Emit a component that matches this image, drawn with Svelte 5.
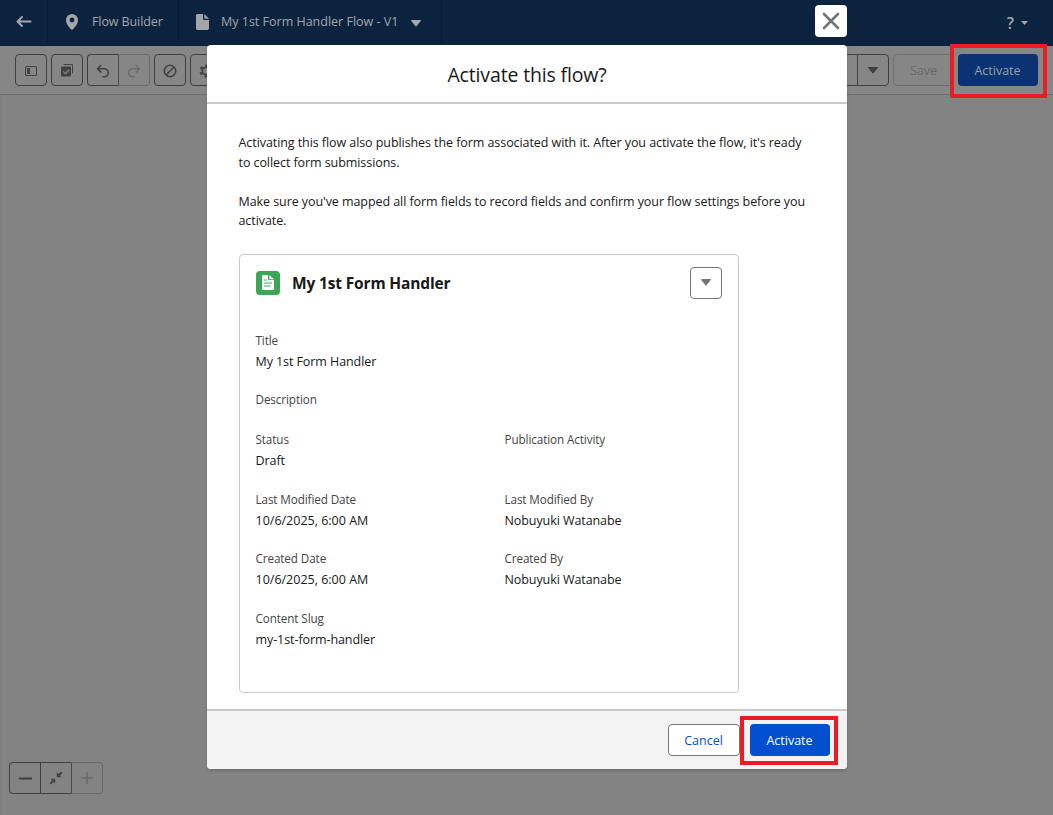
<script>
  const fields = [
    { label: 'Title', value: 'My 1st Form Handler', wide: true },
    { label: 'Description', value: '', wide: true },
    { label: 'Status', value: 'Draft' },
    { label: 'Publication Activity', value: '' },
    { label: 'Last Modified Date', value: '10/6/2025, 6:00 AM' },
    { label: 'Last Modified By', value: 'Nobuyuki Watanabe' },
    { label: 'Created Date', value: '10/6/2025, 6:00 AM' },
    { label: 'Created By', value: 'Nobuyuki Watanabe' },
    { label: 'Content Slug', value: 'my-1st-form-handler', wide: true }
  ];
</script>

<div class="app">
  <nav>
    <div class="back">
      <svg width="16" height="14" viewBox="0 0 16 14" fill="none" stroke="#a3a5a8" stroke-width="2" stroke-linecap="round" stroke-linejoin="round"><path d="M14.500 6.500H1.500M6 2 1.500 6.500 6 11" /></svg>
    </div>
    <div class="brand">
      <svg width="12" height="16" viewBox="0 0 12 16"><path fill="#a3a5a8" fill-rule="evenodd" d="M6 0a6 6 0 0 0-6 6c0 4 3.500 7.500 5.300 9.600.4.500 1 .5 1.400 0C8.500 13.500 12 10 12 6a6 6 0 0 0-6-6Zm0 8.400a2.400 2.400 0 1 1 0-4.800 2.400 2.400 0 0 1 0 4.800Z" /></svg>
      <span class="t-brand">Flow Builder</span>
    </div>
    <div class="flow">
      <svg width="13" height="16" viewBox="0 0 13 16" fill="#a3a5a8"><path d="M1.500 0H7v4.500C7 5.500 7.500 6 8.500 6H13v8.500c0 .8-.7 1.500-1.500 1.500h-10C.7 16 0 15.300 0 14.500v-13C0 .7.7 0 1.500 0Z" /><path d="M8.300 0 13 4.700H9c-.4 0-.7-.3-.7-.7Z" /></svg>
      <span>My 1st Form Handler Flow - V1</span>
      <svg class="caret" width="10" height="7" viewBox="0 0 10 7"><path fill="#a3a5a8" d="M.6 0h8.800c.5 0 .7.500.4.900L5.500 6.300c-.3.400-.7.400-1 0L.2.900C-.1.500.1 0 .6 0Z" /></svg>
    </div>
    <div class="help">
      <b>?</b>
      <svg width="7" height="4" viewBox="0 0 7 4"><path fill="#a3a5a8" d="M0 0h7L3.500 4Z" /></svg>
    </div>
  </nav>

  <div class="toolbar">
    <div class="tool">
      <svg width="12" height="10" viewBox="0 0 12 10"><rect x=".5" y=".5" width="11" height="9" rx=".5" fill="none" stroke="#414141" /><path fill="#414141" d="M2 2h3v6H2z" /></svg>
    </div>
    <div class="tool">
      <svg width="12" height="13" viewBox="0 0 12 13"><path fill="#414141" d="M3.500 0h7.500a1 1 0 0 1 1 1v7.500a1 1 0 0 1-1 1V1H2.500a1 1 0 0 1 1-1Z" /><rect y="2.500" width="10" height="10" rx="1" fill="#414141" /><path d="m2.300 7.500 2.100 2.100L8 6" stroke="#858585" stroke-width="1.300" fill="none" /></svg>
    </div>
    <div class="pair">
      <div class="tool left">
        <svg width="14" height="14" viewBox="0 0 14 14" fill="none" stroke="#414141" stroke-width="1.600" stroke-linecap="round" stroke-linejoin="round"><path d="M4.800 1.500 1.500 4.800l3.300 3.300M1.700 4.800H8.300a4 4 0 0 1 0 8H7" /></svg>
      </div>
      <div class="tool right faint">
        <svg width="14" height="14" viewBox="0 0 14 14" fill="none" stroke="#6b6b6b" stroke-width="1.600" stroke-linecap="round" stroke-linejoin="round"><path d="M9.200 1.500 12.500 4.800 9.200 8.100M12.300 4.800H5.700a4 4 0 0 0 0 8H7" /></svg>
      </div>
    </div>
    <div class="tool">
      <svg width="14" height="14" viewBox="0 0 14 14" fill="none" stroke="#414141" stroke-width="1.600"><circle cx="7" cy="7" r="5.700" /><path d="m3 11 8-8" /></svg>
    </div>
    <div class="tool">
      <svg width="14" height="14" viewBox="0 0 14 14" fill="none" stroke="#414141"><circle cx="7" cy="7" r="3.700" stroke-width="1.800" /><circle cx="7" cy="7" r="5.600" stroke-width="2" stroke-dasharray="2.700 3.164" stroke-dashoffset="-1.580" /></svg>
    </div>
    <div class="split">
      <div class="tool wide-tool"></div>
      <div class="tool more">
        <svg width="10" height="7" viewBox="0 0 10 7"><path fill="#414141" d="M.6 0h8.800c.5 0 .7.500.4.900L5.500 6.300c-.3.400-.7.400-1 0L.2.900C-.1.500.1 0 .6 0Z" /></svg>
      </div>
    </div>
    <div class="save">Save</div>
    <div class="activate dim">Activate</div>
    <i class="mark"></i>
  </div>

  <main>
    <div class="zoom">
      <div class="tool left"><svg width="14" height="14" viewBox="0 0 14 14"><path stroke="#3f3f3f" stroke-width="1.800" stroke-linecap="round" d="M1.500 7.500h12" /></svg></div>
      <div class="tool mid"><svg width="14" height="14" viewBox="0 0 14 14" stroke="#414141" stroke-width="2" fill="#414141"><path d="M12.200 1.800 9.500 4.500M1.800 12.200l2.700-2.700" stroke-linecap="round" /><path stroke="none" d="M7.800 1.500v4.700h4.700ZM6.200 12.500V7.800H1.500Z" /></svg></div>
      <div class="tool right faint"><svg width="14" height="14" viewBox="0 0 14 14"><path stroke="#6b6b6b" stroke-width="1.600" stroke-linecap="round" d="M1.500 7h11M7 1.500v11" /></svg></div>
    </div>
  </main>

  <section class="modal">
    <div class="close"><svg width="18" height="18" viewBox="0 0 18 18"><path stroke="#747474" stroke-width="2.600" stroke-linecap="round" d="m2 2 14 14M16 2 2 16" /></svg></div>
    <header><h1>Activate this flow?</h1></header>
    <div class="body">
      <p>Activating this flow also publishes the form associated with it. After you activate the flow, it's ready<br />to collect form submissions.</p>
      <p>Make sure you've mapped all form fields to record fields and confirm your flow settings before you<br />activate.</p>
      <article>
        <div class="cardhead">
          <span class="doc">
            <svg width="12" height="15" viewBox="0 0 12 15"><path fill="#fff" d="M1.300 0H6v3.700C6 4.600 6.500 5 7.200 5H12v8.700a1.300 1.300 0 0 1-1.300 1.300H1.300A1.300 1.300 0 0 1 0 13.700V1.300A1.300 1.300 0 0 1 1.300 0ZM7.300 0 12 4.200H8c-.4 0-.7-.3-.7-.7Z" /><path d="M2.500 5h2M2.500 8h7M2.500 11h5.500" stroke="#3ba755" stroke-width="1.200" stroke-linecap="round" /></svg>
          </span>
          <h2>My 1st Form Handler</h2>
          <div class="menu"><svg width="10" height="7" viewBox="0 0 10 7"><path fill="#747474" d="M.6 0h8.800c.5 0 .7.500.4.900L5.500 6.300c-.3.400-.7.400-1 0L.2.900C-.1.500.1 0 .6 0Z" /></svg></div>
        </div>
        <dl>
          {#each fields as f}
            <div class:wide={f.wide}>
              <dt>{f.label}</dt>
              <dd class:date={f.value.includes('/')}>{f.value}</dd>
            </div>
          {/each}
        </dl>
      </article>
    </div>
    <footer>
      <div class="cancel">Cancel</div>
      <div class="activate">Activate</div>
      <i class="mark"></i>
    </footer>
  </section>
</div>

<style>
  :global(body) { margin: 0; }
  * { box-sizing: border-box; }
  .app { position: relative; width: 1053px; height: 815px; overflow: hidden; display: flex; flex-direction: column; background: #838383; font-family: "Open Sans", "Noto Sans", sans-serif; font-size: 12.5px; color: #181818; }
  svg { display: block; flex: none; }
  nav { height: 46px; flex: none; display: flex; background: #0c2340; color: #a3a5a8; padding-bottom: 3px; line-height: 20px; white-space: nowrap; box-shadow: inset 0 -1px #0a1e38; }
  nav > div { display: flex; align-items: center; }
  .back { width: 47px; justify-content: center; box-shadow: 1px 0 #091b33; }
  .brand { width: 131px; padding-left: 19px; gap: 14px; box-shadow: 1px 0 #091b33; }
  .t-brand { letter-spacing: -.1px; }
  .flow { width: 263px; padding-left: 18px; gap: 12px; box-shadow: 1px 0 #091b33; }
  .caret { margin: 3px 0 0 1px; }
  .help { margin-left: auto; padding-right: 25px; gap: 7px; }
  .help b { font-size: 16px; font-weight: 600; line-height: 20px; margin-top: 2px; }
  .help svg { margin-top: 3px; }
  .toolbar { position: relative; height: 49px; flex: none; display: flex; padding: 8px 15px 0; gap: 4px; background: #868686; border-bottom: 1px solid #6d6d6d; }
  .tool { width: 32px; height: 32px; border: 1px solid #3f3f3f; border-radius: 4px; display: flex; align-items: center; justify-content: center; }
  .toolbar .tool svg { margin-top: 1px; }
  .pair, .zoom, .split { display: flex; }
  .pair .tool { width: 31px; }
  .pair .right { width: 32px; }
  .tool.left { border-radius: 4px 0 0 4px; border-right-width: 0; }
  .tool.right { border-radius: 0 4px 4px 0; }
  .tool.faint { border-color: #6a6a6a; border-left-color: #4b4b4b; }
  .tool.mid { border-radius: 0; border-right: 0; }
  .split { margin-left: auto; }
  .wide-tool { width: 80px; border-radius: 4px 0 0 4px; border-right: 0; }
  .more { border-radius: 0 4px 4px 0; }
  .save { width: 61px; height: 32px; border: 1px solid #6f6f6f; border-radius: 4px; line-height: 31px; text-align: center; color: #686868; }
  .activate { width: 80px; height: 32px; border-radius: 4px; background: #0250d0; color: #fff; line-height: 33px; text-align: center; padding-right: 1px; }
  .dim { background: #0b3272; color: #9c9fa4; }
  .mark { position: absolute; border: 4px solid #ed1c24; }
  .toolbar .mark { left: 950px; top: -2px; width: 97px; height: 54px; }
  main { flex: 1; display: flex; align-items: flex-end; padding: 0 0 21px 7px; border-left: 2px solid #7f7f7f; }
  .zoom .tool { width: 31px; }
  .zoom .right { width: 32px; }
  .modal { position: absolute; left: 207px; top: 45px; width: 640px; height: 724px; display: flex; flex-direction: column; background: #fff; border-radius: 4px; box-shadow: 0 2px 3px rgba(0,0,0,.16); }
  .close { position: absolute; right: 0; top: -40px; width: 32px; height: 32px; background: #fff; border-radius: 4px; display: flex; align-items: center; justify-content: center; }
  header { height: 59px; border-bottom: 2px solid #c9c9c9; display: flex; justify-content: center; flex: none; }
  h1 { margin: 0; font-weight: 400; font-size: 19.500px; line-height: 60px; letter-spacing: -.15px; }
  .body { flex: 1; padding: 29px 32px 0 32px; }
  p { margin: 0 0 19.500px -.5px; line-height: 19.500px; white-space: nowrap; letter-spacing: -.073px; }
  article { width: 500px; height: 439px; border: 1px solid #c9c9c9; border-radius: 4px; padding: 12px 16px 0; margin-top: 23px; }
  .cardhead { display: flex; align-items: center; height: 32px; }
  .doc { width: 24px; height: 24px; border-radius: 4px; background: #3ba755; display: flex; align-items: center; justify-content: center; }
  h2 { margin: 1px 0 0 12px; font-size: 15.500px; line-height: 24px; font-weight: 700; letter-spacing: -.15px; }
  .menu { margin-left: auto; width: 32px; height: 32px; border: 1px solid #747474; border-radius: 4px; display: flex; align-items: center; justify-content: center; }
  dl { margin: 31px 0 0 -.5px; display: grid; grid-template-columns: 249px 1fr; grid-template-rows: 59px 40px 60px 59px 60px 60px; }
  .wide { grid-column: 1 / 3; }
  dt { font-size: 11.700px; line-height: 20px; color: #444; letter-spacing: -.1px; }
  dd { margin: 0; line-height: 24px; letter-spacing: -.08px; }
  dd.date { letter-spacing: 0; }
  footer { position: relative; height: 60px; flex: none; background: #f3f3f3; border-top: 2px solid #c9c9c9; border-radius: 0 0 4px 4px; display: flex; justify-content: flex-end; padding: 13px 17px 0; gap: 10px; }
  .cancel { width: 72px; height: 32px; border: 1px solid #747474; border-radius: 4px; background: #fff; color: #0250d0; line-height: 31px; text-align: center; padding-right: 1px; }
  footer .mark { left: 533px; top: 5px; width: 98px; height: 49px; }
</style>
